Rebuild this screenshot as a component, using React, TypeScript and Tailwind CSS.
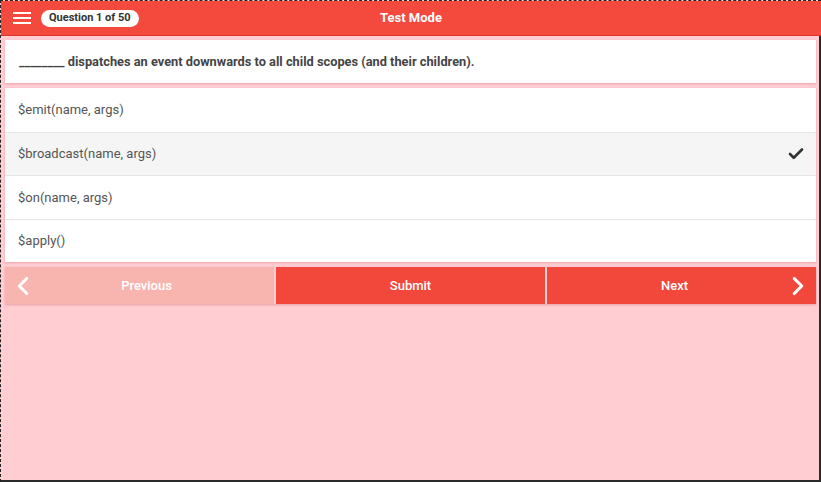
import { Check, ChevronLeft, ChevronRight } from 'lucide-react';

const options = ['$emit(name, args)', '$broadcast(name, args)', '$on(name, args)', '$apply()'];
const selected = 1;

export default function App() {
  return (
    <div
      className="w-[821px] h-[482px] bg-[#ffcdd2] border-t border-l border-dashed border-[#222] shadow-[inset_-2px_-2px_0_#2a2a2a] overflow-hidden flex flex-col"
      style={{ fontFamily: 'Roboto, "Liberation Sans", sans-serif' }}
    >
      <header className="h-[35px] shrink-0 bg-[#f44a3e] border-b border-b-[#e0352a] relative flex items-center px-3">
        <div className="flex flex-col gap-[3px] w-[18px]">
          <span className="h-[2px] bg-white" />
          <span className="h-[2px] bg-white" />
          <span className="h-[2px] bg-white" />
        </div>
        <span className="ml-[10px] bg-white rounded-full px-[8px] h-[17px] flex items-center text-[11px] font-bold text-[#333]">
          Question 1 of 50
        </span>
        <span className="absolute left-1/2 -translate-x-1/2 text-white font-bold text-[13px]">Test Mode</span>
      </header>

      <div className="pl-[4px] pr-[5px] pt-[4px] flex flex-col">
        <div className="bg-white h-[43px] flex items-center px-[14px] shadow-[0_1px_2px_rgba(200,80,80,0.35)] text-[12.8px] font-bold text-[#444]">
          ________ dispatches an event downwards to all child scopes (and their children).
        </div>

        <div className="mt-[5px] bg-white shadow-[0_1px_2px_rgba(200,80,80,0.35)] flex flex-col">
          {options.map((o, i) => (
            <div
              key={o}
              className={`h-[43.5px] flex items-center justify-between px-[13px] text-[13px] text-[#555] ${
                i > 0 ? 'border-t border-t-[#e6e6e6]' : ''
              } ${i === selected ? 'bg-[#f5f5f5]' : 'bg-white'}`}
            >
              <span>{o}</span>
              {i === selected && <Check className="w-[18px] h-[18px] text-[#333] mr-[-2px]" strokeWidth={3.5} />}
            </div>
          ))}
        </div>

        <div className="mt-[5px] grid grid-cols-3 gap-[2px] h-[37px] shadow-[0_1px_2px_rgba(200,80,80,0.35)]">
          <button className="relative bg-[#f8b5b0] text-white font-medium text-[13px] flex items-center justify-center pl-[14px]">
            <ChevronLeft className="absolute left-[3px] w-[30px] h-[30px]" strokeWidth={2.5} />
            Previous
          </button>
          <button className="bg-[#f2473b] text-white font-medium text-[13px] flex items-center justify-center">
            Submit
          </button>
          <button className="relative bg-[#f2473b] text-white font-medium text-[13px] flex items-center justify-center pr-[14px]">
            Next
            <ChevronRight className="absolute right-[3px] w-[30px] h-[30px]" strokeWidth={2.5} />
          </button>
        </div>
      </div>
    </div>
  );
}
